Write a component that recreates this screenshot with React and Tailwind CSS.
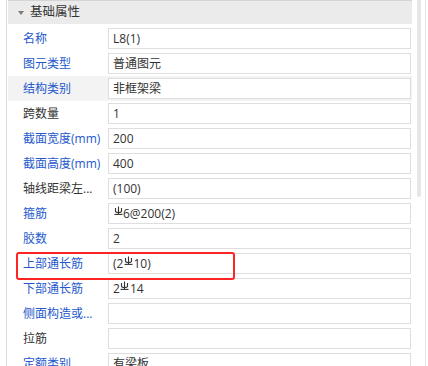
import React from 'react'

// 三级钢筋符号
const Rebar = () => (
  <svg width="9" height="9" viewBox="0 0 9 9" className="inline-block mx-[0.5px] -translate-y-[3px]" fill="none" stroke="#333" strokeWidth="1.1">
    <path d="M4.5 0.5 V8" />
    <path d="M1.5 2 V5 Q1.5 6.5 4.5 6.5 Q7.5 6.5 7.5 5 V2" />
    <path d="M0.5 8.4 H8.5" />
  </svg>
)

const rows = [
  { label: '名称', value: 'L8(1)', blue: true },
  { label: '图元类型', value: '普通图元', blue: true },
  { label: '结构类别', value: '非框架梁', blue: true, active: true },
  { label: '跨数量', value: '1' },
  { label: '截面宽度(mm)', value: '200', blue: true },
  { label: '截面高度(mm)', value: '400', blue: true },
  { label: '轴线距梁左...', value: '(100)' },
  { label: '箍筋', value: <><Rebar />6@200(2)</>, blue: true },
  { label: '胶数', value: '2', blue: true },
  { label: '上部通长筋', value: <>(2<Rebar />10)</>, blue: true },
  { label: '下部通长筋', value: <>2<Rebar />14</>, blue: true },
  { label: '侧面构造或...', value: '', blue: true },
  { label: '拉筋', value: '' },
  { label: '定额类别', value: '有梁板', blue: true },
]

const App = () => {
  return (
    <div
      className="w-[428px] h-[366px] overflow-hidden bg-white flex text-[12px]"
      style={{ fontFamily: '"Open Sans", "Noto Sans CJK SC", sans-serif' }}
    >
      <div className="w-[6px]" />
      <div className="w-[1px] bg-[#dcdcdc]" />
      <div className="w-[1px]" />
      <div className="w-[404px] relative">
        <div className="h-[24px] bg-[#ebebeb] border-t border-[#d4d4d4] flex items-center pl-[10px] mb-[2px]">
          <svg width="6" height="4" viewBox="0 0 6 4" className="mr-[6px]">
            <path d="M0 0 H6 L3 4 Z" fill="#7a7a7a" />
          </svg>
          <span className="text-[#333] text-[12.5px]">基础属性</span>
        </div>
        {rows.map((r, i) => (
          <div
            key={i}
            className={`h-[25px] flex items-center ${r.active ? 'bg-[#f3f3f3]' : ''}`}
          >
            <div
              className={`w-[100px] pl-[15px] whitespace-nowrap ${r.blue ? 'text-[#2458cc]' : 'text-[#333]'}`}
            >
              {r.label}
            </div>
            <div className="flex-1 mr-[1px] h-[21px] border border-[#dedede] bg-white flex items-center pl-[4px] text-[#333] whitespace-nowrap">
              {r.value}
            </div>
          </div>
        ))}
        <div className="absolute left-[8px] top-[252px] w-[219px] h-[28px] border-2 border-[#ff2424] rounded-[3px]" />
      </div>
      <div className="w-[5px]" />
      <div className="w-[4px]">
        <div className="h-[197px] bg-[#e6e6e6] rounded-b-[2px]" />
      </div>
      <div className="w-[4px]" />
      <div className="w-[1px] bg-[#e3e3e3]" />
    </div>
  )
}

export default App
